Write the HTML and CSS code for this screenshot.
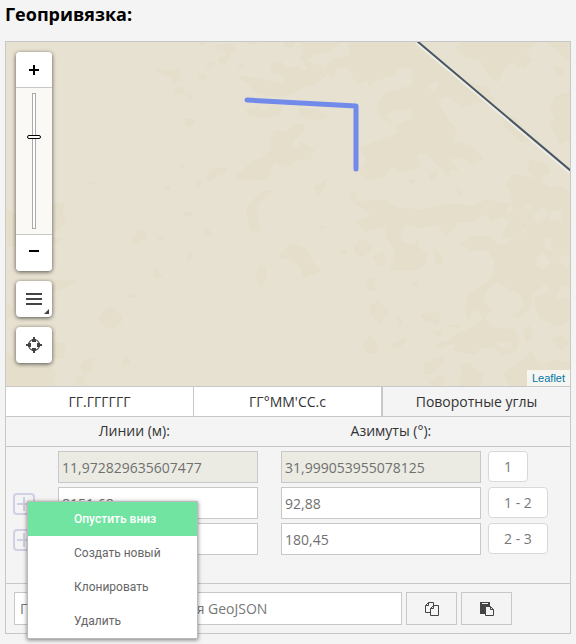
FILE: index.html
```html
<!DOCTYPE html>
<html lang="ru">
<head>
<meta charset="utf-8">
<meta name="viewport" content="width=device-width, initial-scale=1">
<title>Геопривязка</title>
<link rel="stylesheet" href="styles.css">
</head>
<body>
<h1 class="title">Геопривязка:</h1>
<main class="panel">
  <section class="map" aria-label="Карта">
    <svg class="map-canvas" viewBox="6 42 564 344" preserveAspectRatio="xMinYMin slice" aria-hidden="true">
      <g class="terrain">
        <path d="M348 42 L418 42 L452 70 L468 83 L490 88 L484 100 L462 106 L448 96 L437 101 L446 118 L456 128 L453 142 L470 146 L483 158 L472 164 L460 156 L448 160 L459 170 L440 167 L426 153 L416 154 L420 166 L402 172 L392 166 L384 176 L368 180 L359 172 L366 160 L360 148 L380 140 L398 134 L397 126 L382 118 L377 106 L386 92 L412 86 L414 70 L398 66 L394 75 L379 79 L366 88 L354 80 L350 68 L338 66 L332 78 L324 70 L332 60 L350 56Z"/>
        <path d="M300 42 L320 44 L340 42 L328 52 L314 54 L306 62 L320 66 L326 76 L314 84 L302 88 L286 96 L268 96 L256 92 L246 82 L238 78 L246 76 L262 80 L282 84 L286 76 L273 72 L271 64 L281 62 L286 69 L297 66 L303 72 L309 68 L300 58 L304 50Z"/>
        <path d="M246 110 L258 107 L262 112 L270 106 L282 106 L280 114 L264 118 L250 116Z"/>
        <path d="M271 136 L276 130 L286 132 L294 124 L304 124 L303 132 L294 140 L290 150 L304 148 L310 158 L296 160 L286 168 L274 162 L270 170 L268 178 L256 180 L236 180 L235 174 L244 170 L250 162 L262 158 L272 148Z"/>
        <path d="M156 71 L178 70 L180 76 L174 84 L173 78Z M175 88 L181 87 L185 91 L181 95 L175 94Z M187 94 L192 96 L191 99 L187 98Z M185 120 L193 119 L195 123 L190 127 L185 125Z M198 76 L204 74 L206 78 L200 79Z M206 66 L214 62 L215 65 L209 68Z M214 46 L230 44 L236 49 L229 56 L224 64 L219 63 L218 59 L227 55 L225 50Z M200 42 L206 42 L202 46Z M245 42 L258 42 L256 45Z M284 42 L294 42 L293 47 L287 49Z M238 65 L244 66 L241 69Z"/>
        <path d="M207 178 L211 170 L220 168 L226 168 L226 172 L217 176 L210 181Z M196 181 L202 183 L200 187 L196 185Z M180 164 L184 164 L182 168Z M165 188 L170 187 L168 191Z M90 183 L98 182 L96 185Z M183 214 L189 212 L194 215 L188 216Z M204 232 L212 232 L210 235 L204 234Z M133 238 L139 231 L146 231 L146 238 L139 243 L133 244Z M158 238 L163 237 L163 241 L158 241Z M187 255 L191 251 L192 256 L189 261Z M154 275 L156 267 L159 273 L162 277 L153 277Z M128 295 L136 294 L135 297 L128 297Z"/>
        <path d="M99 318 L108 308 L114 309 L122 318 L120 324 L113 328 L108 328 L100 323Z M81 367 L84 361 L92 358 L91 372 L83 373Z M122 361 L128 358 L130 363 L122 368Z M76 378 L82 376 L85 382 L82 385 L76 384Z M52 203 L64 204 L62 213 L66 220 L60 228 L52 232Z M52 280 L76 281 L68 286 L58 290 L52 290Z M52 342 L64 344 L64 358 L52 358Z M6 352 L16 360 L30 368 L46 364 L56 372 L53 386 L6 386Z M6 210 L16 214 L16 246 L8 246Z M6 304 L14 310 L12 316 L6 318Z M52 238 L62 239 L58 242 L52 241Z"/>
        <path d="M272 191 L260 201 L255 209 L257 221 L247 215 L247 209 L250 203 L256 197 L261 192Z M247 212 L256 210 L260 228 L255 234 L250 228Z M278 257 L292 243 L306 249 L312 261 L321 270 L304 278 L300 266 L290 259Z M256 275 L260 267 L265 267 L266 275 L263 284 L259 285Z M204 231 L210 230 L208 234Z M320 226 L325 226 L323 229Z M338 251 L345 249 L347 252 L342 254Z"/>
        <path d="M354 202 L384 200 L396 208 L420 210 L446 204 L472 206 L487 200 L510 204 L504 216 L516 210 L528 226 L512 238 L502 236 L510 220 L502 216 L492 222 L484 214 L472 222 L459 222 L446 236 L438 224 L420 228 L405 224 L400 240 L412 246 L417 240 L420 248 L428 256 L424 264 L414 270 L390 270 L396 252 L386 236 L386 226 L366 232 L356 222 L372 216Z M354 247 L362 240 L371 244 L370 252 L362 256 L355 252Z M373 257 L383 252 L386 262 L380 266Z M434 250 L440 254 L443 262 L436 264Z M421 260 L426 261 L425 266 L421 265Z"/>
        <path d="M510 191 L524 180 L540 178 L548 188 L560 186 L570 192 L570 286 L561 286 L548 310 L536 308 L534 298 L552 290 L544 284 L530 296 L532 306 L518 318 L511 316 L526 306 L520 294 L508 288 L498 282 L488 288 L482 300 L492 310 L484 318 L474 308 L468 322 L466 310 L468 294 L478 288 L488 282 L494 272 L495 262 L488 250 L472 250 L460 244 L474 236 L490 236 L500 246 L514 238 L526 232 L524 216 L514 210Z"/>
        <path d="M536 310 L550 302 L566 298 L570 302 L570 320 L556 326 L540 318Z M370 307 L378 301 L388 312 L380 322 L371 314Z M367 279 L374 280 L375 290 L368 291Z M398 317 L402 320 L399 326Z M421 316 L434 311 L440 314 L438 324 L424 320Z M363 344 L370 336 L378 346 L375 352 L367 353Z M391 345 L406 337 L406 342 L396 349Z M434 331 L442 331 L441 336 L434 334Z M448 326 L462 325 L460 328Z M412 282 L418 284 L416 289Z"/>
        <path d="M437 344 L450 340 L455 335 L472 328 L484 318 L494 328 L514 330 L519 342 L516 350 L502 354 L492 346 L480 348 L476 354 L462 352 L452 350 L458 342 L450 344 L440 348Z M524 328 L530 326 L532 338 L526 342Z M424 363 L434 360 L446 356 L438 366 L432 374 L424 374Z M460 386 L462 366 L470 362 L474 370 L484 376 L480 386Z M430 382 L440 376 L444 380 L442 386 L430 386Z M514 366 L526 358 L530 350 L536 360 L542 366 L556 360 L570 364 L570 386 L510 386 L504 374Z M552 338 L562 336 L570 341 L562 350Z"/>
        <path d="M462 42 L536 42 L526 52 L532 60 L524 68 L512 62 L504 68 L498 82 L488 74 L480 60 L466 56 L456 50Z M548 42 L570 42 L570 60 L560 54Z M556 96 L570 92 L570 140 L560 144 L550 124 L556 118 L550 108Z M554 66 L566 70 L560 76Z M484 88 L496 100 L490 106 L478 100Z M502 112 L518 120 L530 140 L520 142 L506 128Z"/>
        <path d="M506 184 L514 175 L532 178 L546 188 L570 194 L570 208 L520 204Z M530 160 L546 164 L550 172 L538 180 L528 172Z M444 162 L449 160 L451 168 L448 176 L444 170Z M430 174 L436 170 L437 176 L430 180Z M456 188 L464 192 L460 196Z M408 180 L416 181 L412 185Z M314 188 L326 179 L325 188 L318 195Z M350 192 L358 194 L352 202Z M298 108 L316 110 L328 117 L312 120 L300 116Z M300 142 L314 150 L310 160 L300 156Z"/>
      </g>
      <g class="clearing">
        <path d="M396 74 L410 70 L410 80 L400 84Z M388 116 L394 112 L412 110 L410 118 L396 124Z M362 84 L368 82 L366 88Z M428 86 L438 82 L434 90Z M534 216 L542 208 L548 214 L538 222Z M552 212 L562 211 L560 220 L550 219Z M526 206 L532 206 L530 211Z M546 238 L550 240 L552 250 L545 248Z M538 258 L542 253 L550 262 L544 268 L536 264Z M410 238 L416 236 L414 243Z M424 234 L434 230 L428 240Z M498 344 L510 343 L510 346 L502 347Z M560 256 L570 258 L568 268 L562 264Z M490 226 L498 224 L496 232Z M458 224 L464 228 L460 232Z"/>
      </g>
      <path class="road-halo" d="M416 42 L570 172"/>
      <path class="road" d="M417 41 L571 171"/>
      <path class="track" d="M247 100 L356 106 L356 169"/>
    </svg>
    <div class="map-controls">
      <div class="zoom">
        <button class="zoom-btn zoom-in" type="button" aria-label="Приблизить"><svg width="12" height="12" viewBox="0 0 12 12"><path d="M1 6H11M6 1V11" stroke="#000" stroke-width="2"/></svg></button>
        <div class="zoom-rail"><input class="zoom-range" type="range" min="0" max="19" value="13" aria-label="Масштаб"></div>
        <button class="zoom-btn" type="button" aria-label="Отдалить"><svg width="12" height="12" viewBox="0 0 12 12"><path d="M1 4H11" stroke="#000" stroke-width="2"/></svg></button>
      </div>
      <button class="map-btn" type="button" aria-label="Слои">
        <svg width="36" height="36" viewBox="0 0 36 36"><path d="M10 13H26M10 18H26M10 23H26" stroke="#444" stroke-width="2"/><path d="M33 28V33H28Z" fill="#444"/></svg>
      </button>
      <button class="map-btn" type="button" aria-label="Моё местоположение">
        <svg width="36" height="36" viewBox="0 0 36 36" fill="none" stroke="#444"><circle cx="18" cy="18" r="5.5" stroke-width="1.2"/><path d="M18 10V15M18 21V26M10 18H15M21 18H26" stroke-width="2"/><path d="M18 12V15M18 21V24M12 18H15M21 18H24" stroke-width="4"/></svg>
      </button>
    </div>
    <div class="attribution"><a href="#">Leaflet</a></div>
  </section>

  <div class="tabs" role="tablist">
    <button class="tab" type="button" role="tab">ГГ.ГГГГГГ</button>
    <button class="tab" type="button" role="tab">ГГ°ММ'СС.с</button>
    <button class="tab tab-active" type="button" role="tab" aria-selected="true">Поворотные углы</button>
  </div>

  <div class="heads">
    <div class="head" id="lines">Линии (м):</div>
    <div class="head" id="azimuths">Азимуты (°):</div>
  </div>

  <div class="rows">
    <div class="row">
      <div class="row-tool"></div>
      <input class="field" type="text" value="11,972829635607477" aria-labelledby="lines" disabled>
      <input class="field" type="text" value="31,999053955078125" aria-labelledby="azimuths" disabled>
      <div class="row-tag"><span class="tag">1</span></div>
    </div>
    <div class="row">
      <div class="row-tool">
        <button class="add" type="button" aria-label="Действия">
          <svg width="22" height="22" viewBox="0 0 22 22" fill="none" stroke="#cfd0e3" stroke-width="2"><rect x="1" y="1" width="20" height="20" rx="3"/><path d="M4 11H18M11 4V18"/></svg>
        </button>
        <div class="menu" role="menu">
          <button class="menu-item menu-item-active" type="button" role="menuitem">Опустить вниз</button>
          <button class="menu-item" type="button" role="menuitem">Создать новый</button>
          <button class="menu-item" type="button" role="menuitem">Клонировать</button>
          <button class="menu-item" type="button" role="menuitem">Удалить</button>
        </div>
      </div>
      <input class="field" type="text" value="8151,68" aria-labelledby="lines">
      <input class="field" type="text" value="92,88" aria-labelledby="azimuths">
      <div class="row-tag"><span class="tag">1 - 2</span></div>
    </div>
    <div class="row">
      <div class="row-tool">
        <button class="add" type="button" aria-label="Действия">
          <svg width="22" height="22" viewBox="0 0 22 22" fill="none" stroke="#cfd0e3" stroke-width="2"><rect x="1" y="1" width="20" height="20" rx="3"/><path d="M4 11H18M11 4V18"/></svg>
        </button>
      </div>
      <input class="field" type="text" aria-labelledby="lines">
      <input class="field" type="text" value="180,45" aria-labelledby="azimuths">
      <div class="row-tag"><span class="tag">2 - 3</span></div>
    </div>
  </div>

  <div class="geojson">
    <input class="geo-field" type="text" placeholder="Поле для форматирования GeoJSON" aria-label="GeoJSON">
    <button class="geo-btn" type="button" aria-label="Копировать">
      <svg width="16" height="16" viewBox="0 0 16 16" fill="#f4f4f4" stroke="#444" stroke-width="1"><path d="M4.500 1.500H9.500V11.500H1.500V4.500ZM4.500 1.500V4.500H1.500"/><path d="M9.500 4.500H14.500V14.500H6.500V7.500ZM9.500 4.500V7.500H6.500"/></svg>
    </button>
    <button class="geo-btn" type="button" aria-label="Вставить">
      <svg width="16" height="16" viewBox="0 0 16 16"><path d="M1 1H11V5H7L6 6V13H1Z" fill="#444"/><path d="M3 2.500H9" stroke="#f4f4f4"/><path d="M6.500 5.500H11.500L14.500 8.500V14.500H6.500Z M11.500 5.500V8.500H14.500" fill="#f4f4f4" stroke="#444"/></svg>
    </button>
  </div>
</main>
</body>
</html>
```
FILE: styles.css
```css
* {
  box-sizing: border-box;
}

body {
  margin: 0;
  padding: 0 5px 10px;
  background: #f4f4f4;
  color: #333;
  font: 14px/20px "Open Sans", sans-serif;
}

button,
input {
  margin: 0;
  font: inherit;
  color: inherit;
}

button {
  padding: 0;
  border: 0;
  background: none;
  cursor: pointer;
}

svg {
  display: block;
}

.title {
  margin: 0;
  padding: 2px 0 15px;
  font-size: 18px;
  line-height: 24px;
  font-weight: 700;
  color: #000;
}

.panel {
  border: 1px solid #c8c8c8;
}

.map {
  position: relative;
  height: 344px;
  overflow: hidden;
  background: #e7e1d1;
}

.map-canvas {
  width: 100%;
  height: 100%;
}

.terrain {
  fill: #e4deca;
  stroke: #e4deca;
  stroke-width: 1;
  stroke-linejoin: round;
}

.clearing {
  fill: #e7e1d1;
  stroke: #e7e1d1;
  stroke-width: 2;
  stroke-linejoin: round;
}

.road,
.road-halo,
.track {
  fill: none;
}

.road {
  stroke: #485663;
  stroke-width: 2;
}

.road-halo {
  stroke: #efeee6;
  stroke-width: 3;
}

.track {
  stroke: #728aea;
  stroke-width: 5;
  stroke-linecap: round;
  stroke-linejoin: round;
}

.map-controls {
  position: absolute;
  top: 10px;
  left: 10px;
  display: flex;
  flex-direction: column;
  gap: 10px;
  width: 36px;
}

.zoom,
.map-btn {
  border-radius: 4px;
  box-shadow: 0 1px 4px rgba(0, 0, 0, 0.65);
  overflow: hidden;
}

.zoom-btn {
  display: grid;
  place-items: center;
  width: 100%;
  height: 36px;
  background: #fff;
}

.zoom-in {
  height: 35px;
}

.zoom-rail {
  display: flex;
  justify-content: center;
  padding: 5px 0;
  border: solid #c8c8c8;
  border-width: 1px 0;
  background: rgba(255, 255, 255, 0.8);
}

.zoom-range {
  appearance: none;
  writing-mode: vertical-lr;
  direction: rtl;
  width: 14px;
  height: 136px;
  background: linear-gradient(#aaa, #aaa) center / 4px 100% no-repeat;
}

.zoom-range::-webkit-slider-runnable-track {
  width: 14px;
  background: linear-gradient(#fff, #fff) center / 2px 134px no-repeat;
}

.zoom-range::-webkit-slider-thumb {
  appearance: none;
  width: 14px;
  height: 4px;
  border: 1px solid #000;
  border-radius: 2px;
  background: #fff;
}

.map-btn {
  height: 36px;
  background: #fff;
}

.attribution {
  position: absolute;
  right: 0;
  bottom: 0;
  padding: 0 5px;
  background: rgba(255, 255, 255, 0.7);
  font: 11px/16px "Liberation Sans", sans-serif;
}

.attribution a {
  color: #0078a8;
  text-decoration: none;
}

.tabs,
.heads {
  display: flex;
  border-top: 1px solid #c8c8c8;
}

.tab {
  flex: 1;
  height: 29px;
  background: #fff;
}

.tab + .tab {
  border-left: 1px solid #c8c8c8;
}

.tab + .tab-active {
  border-left-width: 2px;
  background: #f4f4f4;
}

.head {
  width: 45.5%;
  padding: 4px 0 5px;
  text-align: center;
}

.rows {
  display: flex;
  flex-direction: column;
  gap: 4px;
  padding: 4px 0 28px;
  border-top: 1px solid #c8c8c8;
}

.row {
  display: flex;
}

.row-tool {
  position: relative;
  width: 52px;
  padding: 6px 7px 0;
}

.add {
  display: block;
}

.field {
  flex: 1;
  min-width: 0;
  height: 32px;
  padding: 0 3px;
  border: 1px solid #c8c8c8;
  border-radius: 0;
  background: #fff;
  color: #707070;
}

.field + .field {
  margin-left: 23px;
}

.field:disabled {
  background: #ebebe4;
}

.row-tag {
  width: 82px;
  height: 32px;
  margin-left: 7px;
}

.tag {
  display: inline-block;
  padding: 5px 15px 4px;
  border: 1px solid #d8d8d8;
  border-radius: 4px;
  background: #fff;
  color: #777;
}

.geojson {
  display: flex;
  gap: 4px;
  padding: 8px 58px 8px 8px;
  border-top: 1px solid #c8c8c8;
}

.geo-field {
  flex: 1;
  min-width: 0;
  height: 33px;
  padding: 0 5px;
  border: 1px solid #c8c8c8;
  border-radius: 0;
  background: #fff;
}

.geo-field::placeholder {
  color: #777;
}

.geo-btn {
  display: grid;
  place-items: center;
  width: 51px;
  border: 1px solid #c8c8c8;
}

.menu {
  position: absolute;
  z-index: 1;
  top: 14px;
  left: 21px;
  width: 171px;
  border: 1px solid #bbb;
  background: #fff;
  box-shadow: 0 1px 4px rgba(0, 0, 0, 0.5);
}

.menu-item {
  display: block;
  width: 100%;
  height: 34px;
  padding: 0 0 0 46px;
  color: #666;
  font: 12px/34px Roboto, sans-serif;
  text-align: left;
  white-space: nowrap;
}

.menu-item-active {
  background: #71e4a1;
  color: #fff;
  font-weight: 500;
}
```
